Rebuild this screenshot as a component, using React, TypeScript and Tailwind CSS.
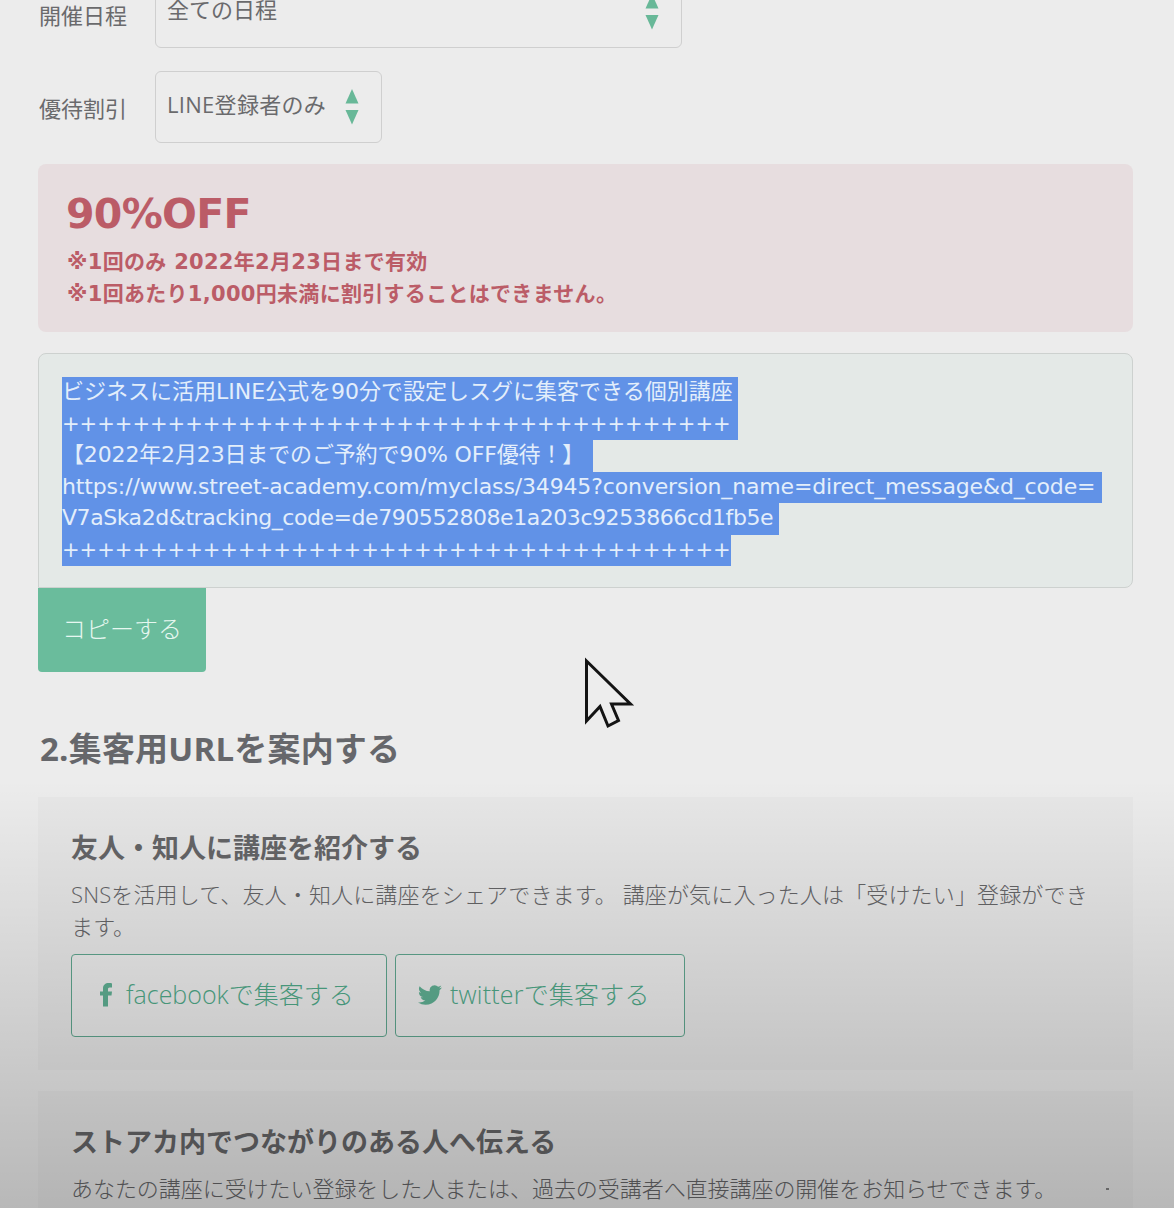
import type { ReactNode } from "react";

const uiFont = "font-['Open_Sans','Noto_Sans_CJK_JP',sans-serif]";
const wideFont = "font-['DejaVu_Sans','Noto_Sans_CJK_JP',sans-serif]";

const pluses = "+".repeat(38);

function Arrows() {
  return (
    <svg width="14" height="36" viewBox="0 0 14 36" className="shrink-0 fill-[#68b898]">
      <path d="M7 0 L13.5 14.5 H0.5 Z" />
      <path d="M0.5 21 H13.5 L7 35.5 Z" />
    </svg>
  );
}

type SelectRowProps = { label: string; value: string; labelClass: string; boxClass: string };

function SelectRow({ label, value, labelClass, boxClass }: SelectRowProps) {
  return (
    <div className="flex h-[72px] items-center text-[22px] text-[#6a6a6c]">
      <div className={`w-[117px] shrink-0 pl-px whitespace-nowrap ${labelClass}`}>{label}</div>
      <div
        className={`flex h-full items-center justify-between rounded-md border border-[#cfcfcf] pr-[22px] pl-[11px] ${boxClass}`}
      >
        <span className="-mt-1.5 whitespace-nowrap">{value}</span>
        <Arrows />
      </div>
    </div>
  );
}

type LineProps = { children: ReactNode; className: string };

// one selected line of the message text
function Line({ children, className }: LineProps) {
  return (
    <div className={`h-[31.5px] bg-[#6192e7] leading-[30px] whitespace-pre ${className}`}>
      {children}
    </div>
  );
}

function Cursor() {
  return (
    <svg width="54" height="76" viewBox="0 0 54 76" className="absolute top-[655px] left-[582px]">
      <path
        d="M4.500 6 V66 L18 51.500 L26 71 L36.500 65.500 L29.500 49 H48.500 Z"
        fill="#ededed"
        stroke="#141414"
        strokeWidth="3"
      />
    </svg>
  );
}

function FacebookIcon() {
  return (
    <svg width="12" height="24" viewBox="0 0 12 24" className="fill-[#5fae92]">
      <path d="M12 .4v4H9.800C8.400 4.400 8 5.100 8 6.200V8.600h4l-.5 4H8V23.600H3V12.600H0v-4h3V5.500C3 2 5.400 .1 8.700 .1c1.500 0 2.700.1 3.300.3z" />
    </svg>
  );
}

function TwitterIcon() {
  return (
    <svg width="24" height="20" viewBox="0 0 24 20" className="fill-[#5fae92]">
      <path d="M23.950 2.570a10 10 0 0 1-2.820.780 4.960 4.960 0 0 0 2.160-2.730c-.950.560-2 .960-3.130 1.190a4.920 4.920 0 0 0-8.380 4.480C7.690 6.100 4.070 4.130 1.640 1.160a4.820 4.820 0 0 0-.670 2.480c0 1.710.870 3.210 2.190 4.100a4.900 4.900 0 0 1-2.230-.620v.060a4.920 4.920 0 0 0 3.950 4.830 5 5 0 0 1-2.210.090 4.940 4.940 0 0 0 4.600 3.420A9.870 9.870 0 0 1 0 17.540a13.990 13.990 0 0 0 7.550 2.210c9.050 0 14-7.500 14-13.980 0-.210 0-.420-.020-.630a9.940 9.940 0 0 0 2.420-2.570z" />
    </svg>
  );
}

export default function App() {
  return (
    <div className={`relative h-[1208px] w-[1174px] overflow-hidden bg-[#ececec] pl-[38px] ${uiFont}`}>
      <div className="-mt-6 w-[1095px]">
        <SelectRow label="開催日程" value="全ての日程" labelClass="pt-1.5" boxClass="w-[527px]" />
        <div className="h-[23px]" />
        <SelectRow
          label="優待割引"
          value="LINE登録者のみ"
          labelClass="pt-0.5"
          boxClass="w-[227px] tracking-[0.3px]"
        />

        <div className={`mt-[21px] h-[168px] rounded-lg bg-[#e7dddf] px-[29px] pt-[23px] font-bold text-[#bb5c67] ${wideFont}`}>
          <p className="-ml-px h-[60px] text-[41px] leading-[54px] tracking-[-0.7px]">90%OFF</p>
          <div className="text-[21px] leading-[31.5px] tracking-[0.3px] whitespace-nowrap">
            <p>※1回のみ 2022年2月23日まで有効</p>
            <p>※1回あたり1,000円未満に割引することはできません。</p>
          </div>
        </div>

        <div className={`mt-[21px] flex h-[235px] flex-col items-start rounded-lg rounded-bl-none border border-[#cdd1cf] bg-[#e4e9e7] pt-[23px] pl-[23px] text-[22px] text-[#e3eefb] ${wideFont}`}>
          <Line className="w-[676px]">ビジネスに活用LINE公式を90分で設定しスグに集客できる個別講座</Line>
          <Line className="w-[676px] text-[21px]">{pluses}</Line>
          <Line className="w-[531px] tracking-[-0.15px]">【2022年2月23日までのご予約で90% OFF優待！】</Line>
          <Line className="w-[1040px] tracking-[-0.15px]">
            https://www.street-academy.com/myclass/34945?conversion_name=direct_message&amp;d_code=
          </Line>
          <Line className="w-[717px] tracking-[-0.45px]">V7aSka2d&amp;tracking_code=de790552808e1a203c9253866cd1fb5e</Line>
          <Line className="w-[669px] text-[21px]">{pluses}</Line>
        </div>
        <button className="block h-[84px] w-[168px] rounded-b bg-[#6abc9c] pb-0.5 text-[24px] font-light text-[#e6f7f0]">
          コピーする
        </button>

        <h2 className="mt-[53px] h-[72px] pl-0.5 text-[33px] leading-[48px] font-bold tracking-[0.2px] text-[#66676b]">
          2.集客用URLを案内する
        </h2>

        <section className="h-[273px] bg-[#e7e7e7] px-[33px] pt-[34px] text-[#656567]">
          <h3 className="text-[27px] leading-[34px] font-bold">友人・知人に講座を紹介する</h3>
          <p className="mt-[13px] text-[22px] leading-[32px] font-light tracking-[0.15px] whitespace-nowrap">
            SNSを活用して、友人・知人に講座をシェアできます。 講座が気に入った人は「受けたい」登録ができ
            <br />
            ます。
          </p>
          <div className="mt-3 flex gap-2 text-[25px] font-light text-[#4fa888]">
            <button className="flex h-[83px] w-[316px] items-center rounded border border-[#5fa58e] bg-white/20 pb-0.5 pl-7">
              <FacebookIcon />
              <span className="ml-[14px] whitespace-nowrap">facebookで集客する</span>
            </button>
            <button className="flex h-[83px] w-[290px] items-center rounded border border-[#5fa58e] bg-white/20 pb-0.5 pl-[22px]">
              <TwitterIcon />
              <span className="ml-2 tracking-[0.2px] whitespace-nowrap">twitterで集客する</span>
            </button>
          </div>
        </section>

        <section className="mt-[21px] h-[140px] bg-[#e7e7e7] px-[33px] pt-[34px] text-[#656567]">
          <h3 className="text-[27px] leading-[34px] font-bold">ストアカ内でつながりのある人へ伝える</h3>
          <p className="mt-[13px] text-[22px] leading-[32px] font-light tracking-[-0.05px] whitespace-nowrap">
            あなたの講座に受けたい登録をした人または、過去の受講者へ直接講座の開催をお知らせできます。
          </p>
        </section>
      </div>

      {/* shade over the lower part of the page */}
      <div className="pointer-events-none absolute inset-x-0 top-[780px] bottom-0 bg-linear-to-b from-black/0 to-black/22" />
      <Cursor />
      <i className="absolute top-[1188px] left-[1106px] h-[2px] w-[3px] bg-[#666]" />
    </div>
  );
}
